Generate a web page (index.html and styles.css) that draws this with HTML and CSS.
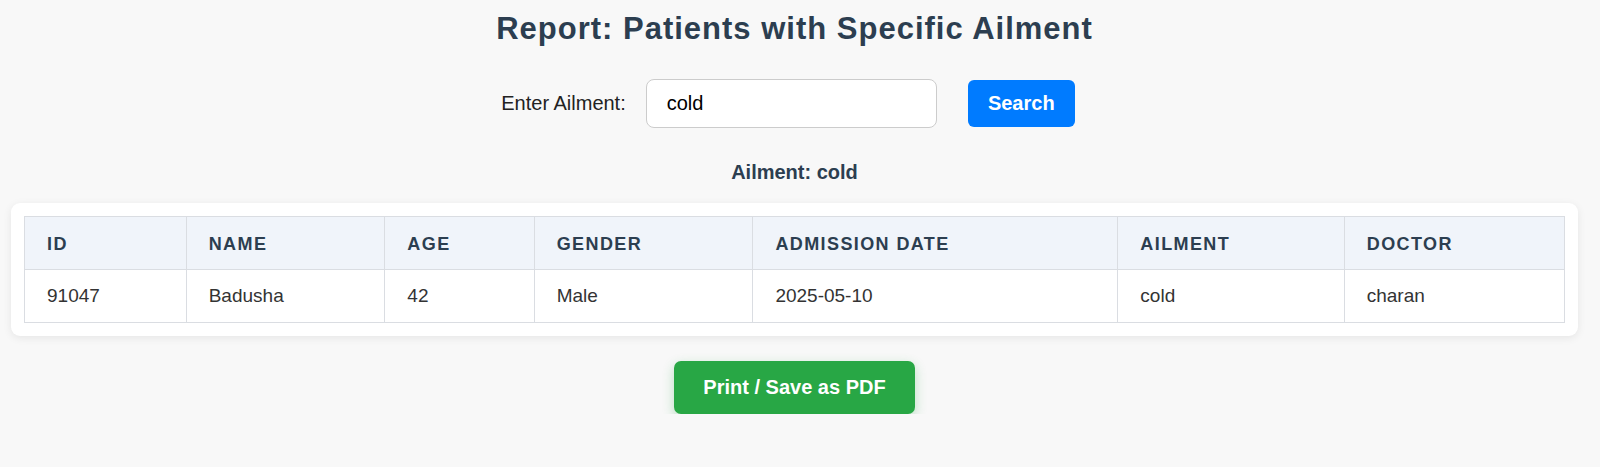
FILE: index.html
```html
<!DOCTYPE html>
<html>
<head>
<meta charset="utf-8">
<link rel="stylesheet" href="styles.css">
</head>
<body>
<h1 class="title">Report: Patients with Specific Ailment</h1>
<form class="search">
  <label class="search-label" for="ailment">Enter Ailment:</label>
  <input class="search-input" id="ailment" type="text" value="cold">
  <button class="btn btn-search" type="button">Search</button>
</form>
<h3 class="subtitle">Ailment: cold</h3>
<div class="card">
  <table class="report">
    <thead>
      <tr>
        <th class="c-id">ID</th>
        <th class="c-name">Name</th>
        <th class="c-age">Age</th>
        <th class="c-gender">Gender</th>
        <th class="c-date">Admission Date</th>
        <th class="c-ail">Ailment</th>
        <th class="c-doc">Doctor</th>
      </tr>
    </thead>
    <tbody>
      <tr>
        <td>91047</td>
        <td>Badusha</td>
        <td>42</td>
        <td>Male</td>
        <td>2025-05-10</td>
        <td>cold</td>
        <td>charan</td>
      </tr>
    </tbody>
  </table>
</div>
<div class="actions">
  <button class="btn btn-print" type="button">Print / Save as PDF</button>
</div>
</body>
</html>
```

FILE: styles.css
```css
html, body {
  margin: 0;
  padding: 0;
}
body {
  background: #f8f8f8;
  font-family: "Liberation Sans", Arial, sans-serif;
  color: #333;
  padding: 0 22px 0 11px;
}
.title {
  margin: 0;
  padding-top: 11px;
  text-align: center;
  font-size: 31px;
  font-weight: bold;
  letter-spacing: 1px;
  color: #2c3e50;
  line-height: 36px;
}
.search {
  display: flex;
  justify-content: center;
  align-items: center;
  margin-top: 32px;
}
.search-label {
  font-size: 20px;
  color: #222;
  margin-right: 20px;
}
.search-input {
  width: 291px;
  height: 49px;
  box-sizing: border-box;
  border: 1.5px solid #ccc;
  border-radius: 8px;
  padding: 0 20px;
  font-size: 20px;
  font-family: "Liberation Sans", Arial, sans-serif;
  color: #000;
  background: #fff;
  margin-right: 31px;
}
.btn {
  border: none;
  color: #fff;
  font-family: "Liberation Sans", Arial, sans-serif;
  font-weight: bold;
  cursor: pointer;
}
.btn-search {
  width: 107px;
  height: 47px;
  background: #007bff;
  border-radius: 6px;
  font-size: 20px;
  margin-right: 13px;
}
.subtitle {
  margin: 32px 0 0;
  text-align: center;
  font-size: 20px;
  line-height: 24px;
  color: #2c3e50;
}
.card {
  margin-top: 19px;
  background: #fff;
  border-radius: 9px;
  padding: 13px;
  box-shadow: 0 2px 8px rgba(0, 0, 0, 0.08);
}
.report {
  width: 100%;
  border-collapse: collapse;
  font-size: 19px;
}
.report th, .report td {
  border: 1px solid #dadde2;
  text-align: left;
  padding: 0 22px;
  height: 52px;
}
.report th {
  background: #f0f4fa;
  color: #2c3e50;
  font-size: 18px;
  font-weight: bold;
  text-transform: uppercase;
  letter-spacing: 1.4px;
  padding-top: 3px;
  height: 49px;
}
.report td {
  color: #333;
}
.c-id { width: 10.5%; }
.c-name { width: 12.9%; }
.c-age { width: 9.7%; }
.c-gender { width: 14.2%; }
.c-date { width: 23.7%; }
.c-ail { width: 14.7%; }
.c-doc { width: 14.3%; }
.actions {
  display: flex;
  justify-content: center;
  margin-top: 25px;
}
.btn-print {
  width: 241px;
  height: 53px;
  background: #28a745;
  border-radius: 7px;
  font-size: 20px;
  box-shadow: 0 4px 12px rgba(40, 167, 69, 0.3);
}
```
